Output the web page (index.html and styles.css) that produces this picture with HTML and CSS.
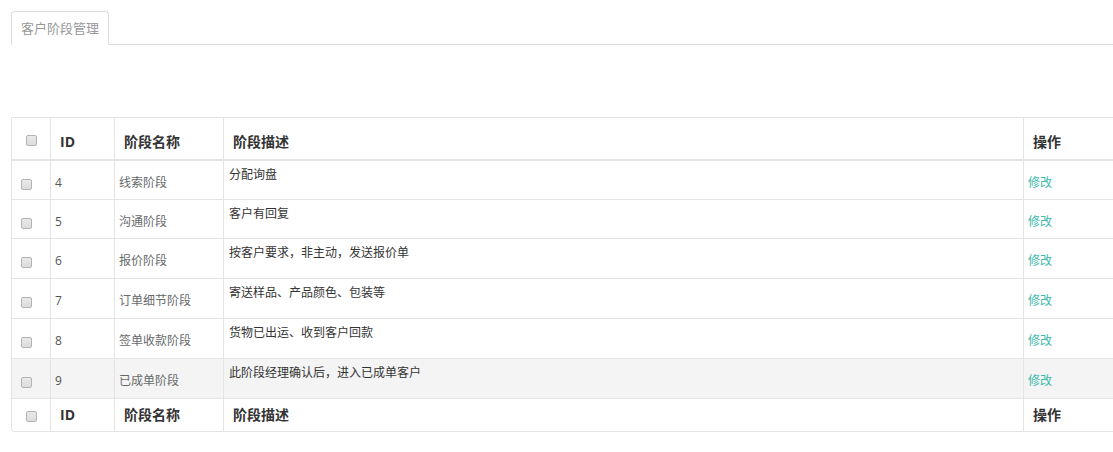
FILE: index.html
```html
<!DOCTYPE html>
<html lang="zh-CN">
<head>
<meta charset="utf-8">
<title>客户阶段管理</title>
<link rel="stylesheet" href="styles.css">
</head>
<body>
<div class="page">
  <div class="tabs">
    <div class="tab">客户阶段管理</div>
  </div>
  <div class="table-wrap">
    <table class="grid">
      <thead>
        <tr>
          <th class="c-check"><span class="cb"></span></th>
          <th class="c-id">ID</th>
          <th class="c-name">阶段名称</th>
          <th class="c-desc">阶段描述</th>
          <th class="c-op">操作</th>
        </tr>
      </thead>
      <tbody>
        <tr>
          <td class="c-check"><span class="cb"></span></td>
          <td class="c-id">4</td>
          <td class="c-name">线索阶段</td>
          <td class="c-desc">分配询盘</td>
          <td class="c-op"><a class="link">修改</a></td>
        </tr>
        <tr>
          <td class="c-check"><span class="cb"></span></td>
          <td class="c-id">5</td>
          <td class="c-name">沟通阶段</td>
          <td class="c-desc">客户有回复</td>
          <td class="c-op"><a class="link">修改</a></td>
        </tr>
        <tr>
          <td class="c-check"><span class="cb"></span></td>
          <td class="c-id">6</td>
          <td class="c-name">报价阶段</td>
          <td class="c-desc">按客户要求，非主动，发送报价单</td>
          <td class="c-op"><a class="link">修改</a></td>
        </tr>
        <tr>
          <td class="c-check"><span class="cb"></span></td>
          <td class="c-id">7</td>
          <td class="c-name">订单细节阶段</td>
          <td class="c-desc">寄送样品、产品颜色、包装等</td>
          <td class="c-op"><a class="link">修改</a></td>
        </tr>
        <tr>
          <td class="c-check"><span class="cb"></span></td>
          <td class="c-id">8</td>
          <td class="c-name">签单收款阶段</td>
          <td class="c-desc">货物已出运、收到客户回款</td>
          <td class="c-op"><a class="link">修改</a></td>
        </tr>
        <tr class="hover">
          <td class="c-check"><span class="cb"></span></td>
          <td class="c-id">9</td>
          <td class="c-name">已成单阶段</td>
          <td class="c-desc">此阶段经理确认后，进入已成单客户</td>
          <td class="c-op"><a class="link">修改</a></td>
        </tr>
      </tbody>
      <tfoot>
        <tr>
          <th class="c-check"><span class="cb"></span></th>
          <th class="c-id">ID</th>
          <th class="c-name">阶段名称</th>
          <th class="c-desc">阶段描述</th>
          <th class="c-op">操作</th>
        </tr>
      </tfoot>
    </table>
  </div>
</div>
</body>
</html>
```

FILE: styles.css
```css
html, body {
  margin: 0;
  padding: 0;
  background: #fff;
  overflow: hidden;
}

body {
  font-family: "Open Sans", "Noto Sans CJK SC", sans-serif;
  font-size: 12px;
  color: #676a6c;
}

.page {
  padding: 11px 0 0 11px;
}

.tabs {
  display: flex;
  border-bottom: 1px solid #ddd;
  height: 33px;
}

.tab {
  box-sizing: border-box;
  width: 98px;
  height: 34px;
  border: 1px solid #ddd;
  border-bottom-color: #fff;
  border-radius: 4px 4px 0 0;
  background: #fff;
  color: #999;
  font-family: "Noto Sans CJK SC", sans-serif;
  font-size: 13px;
  line-height: 31px;
  text-align: center;
}

.table-wrap {
  margin-top: 72px;
  width: 1102px;
}

.grid {
  width: 1114px;
  table-layout: fixed;
  border-collapse: separate;
  border-spacing: 0;
  border: 1px solid #e4e4e4;
  border-radius: 0 0 3px 3px;
}

.grid th,
.grid td {
  box-sizing: border-box;
  border-left: 1px solid #e4e4e4;
  text-align: left;
}

.grid th:first-child,
.grid td:first-child {
  border-left: none;
}

.c-check { width: 38px; }
.c-id { width: 64px; }
.c-name { width: 109px; }
.c-desc { width: 800px; }
.c-op { width: 101px; }

.grid thead th {
  height: 43px;
  border-bottom: 2px solid #e4e4e4;
  padding: 0 9px 7px;
  vertical-align: bottom;
  font-size: 14px;
  font-weight: bold;
  color: #333;
  line-height: 20px;
}

.grid thead th.c-check,
.grid tfoot th.c-check {
  vertical-align: middle;
  text-align: center;
  padding: 0;
}

.grid thead th.c-check { padding-top: 2px; }

.grid tbody td {
  height: 40px;
  border-bottom: 1px solid #e4e4e4;
  padding: 4px 4px 0;
  vertical-align: middle;
  line-height: 17px;
}

.grid tbody tr:nth-child(-n+2) td {
  height: 39px;
}

.grid tbody td.c-check {
  padding-left: 9px;
  padding-top: 6px;
}

.grid tbody td.c-desc {
  vertical-align: top;
  padding: 5px 5px 0;
  color: #333;
}

.grid tbody td.c-id {
  padding-left: 4px;
  color: #555;
}

.grid tbody tr.hover td {
  background: #f4f4f4;
}

.grid tfoot th {
  height: 32px;
  padding: 0 9px;
  vertical-align: middle;
  font-size: 14px;
  font-weight: bold;
  color: #333;
  line-height: 20px;
}

.cb {
  display: inline-block;
  box-sizing: border-box;
  width: 11px;
  height: 11px;
  border: 1px solid #b4b4b4;
  border-radius: 2px;
  background: linear-gradient(#e9e9e9, #dcdcdc);
  vertical-align: middle;
}

.link {
  color: #3cb9a9;
  text-decoration: none;
  cursor: pointer;
}
```
